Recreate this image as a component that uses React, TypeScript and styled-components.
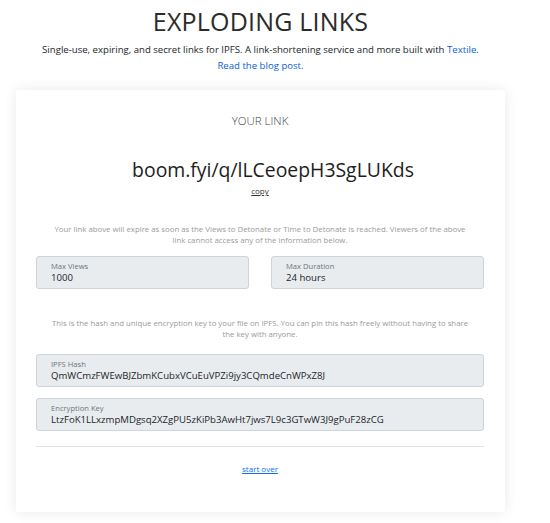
import React from "react";
import styled, { createGlobalStyle } from "styled-components";

const Global = createGlobalStyle`
  html, body { margin: 0; padding: 0; background: #ffffff; }
  body { font-family: "Open Sans", "Noto Sans", sans-serif; color: #212529; }
`;

const Page = styled.div`
  width: 521px;
  padding: 0 16px 13px;
  box-sizing: border-box;
`;

const Header = styled.header`
  text-align: center;
  padding-top: 6px;
`;

const Title = styled.h1`
  margin: 0;
  font-size: 25px;
  font-weight: 400;
  line-height: 30px;
  color: #2b2b2b;
  letter-spacing: 0.2px;
`;

const Lead = styled.p`
  margin: 6px 0 0;
  font-size: 9.6px;
  line-height: 16px;
  color: #212529;
`;

const A = styled.a`
  color: #0b5ed7;
  text-decoration: none;
`;

const Card = styled.main`
  margin-top: 16px;
  background: #fff;
  border-radius: 3px;
  box-shadow: 0 0 14px rgba(0, 0, 0, 0.09);
  padding: 23px 21px 37px 20px;
  display: flex;
  flex-direction: column;
  align-items: stretch;
`;

const Eyebrow = styled.div`
  text-align: center;
  font-size: 11.5px;
  font-weight: 300;
  color: #444;
  line-height: 16px;
`;

const LinkText = styled.div`
  margin-top: 28px;
  padding-left: 26px;
  text-align: center;
  font-size: 19.4px;
  line-height: 26px;
  color: #1d1d1d;
`;

const Copy = styled.a`
  display: block;
  margin-top: 2px;
  text-align: center;
  font-size: 8px;
  color: #333;
  text-decoration: underline;
  line-height: 12px;
`;

const Note = styled.p<{ $top: number }>`
  margin: ${(p) => p.$top}px 15px 0;
  text-align: center;
  font-size: 7.8px;
  line-height: 11px;
  color: #9a9a9a;
`;

const Row = styled.div`
  display: grid;
  grid-template-columns: 1fr 1fr;
  gap: 22px;
  margin-top: 10px;
`;

const Field = styled.div<{ $top?: number }>`
  margin-top: ${(p) => p.$top ?? 0}px;
  background: #e9ecef;
  border: 1px solid #ced4da;
  border-radius: 3px;
  padding: 3px 14px 3px;
  height: 33px;
  box-sizing: border-box;
  display: flex;
  flex-direction: column;
  justify-content: center;
`;

const Label = styled.span`
  font-size: 7.6px;
  line-height: 10px;
  color: #6c757d;
`;

const Value = styled.span`
  font-size: 9.6px;
  line-height: 13px;
  color: #212529;
  white-space: nowrap;
`;

const Divider = styled.hr`
  margin: 15px 0 0;
  border: 0;
  border-top: 1px solid #e5e5e5;
`;

const StartOver = styled.a`
  display: block;
  margin-top: 16px;
  text-align: center;
  font-size: 8px;
  line-height: 12px;
  color: #0d6efd;
  text-decoration: underline;
`;

export default function App() {
  return (
    <>
      <Global />
      <Page>
        <Header>
          <Title>EXPLODING LINKS</Title>
          <Lead>
            Single-use, expiring, and secret links for IPFS. A link-shortening service and more built with{" "}
            <A href="#">Textile</A>.
            <br />
            <A href="#">Read the blog post.</A>
          </Lead>
        </Header>
        <Card>
          <Eyebrow>YOUR LINK</Eyebrow>
          <LinkText>boom.fyi/q/lLCeoepH3SgLUKds</LinkText>
          <Copy href="#">copy</Copy>
          <Note $top={27}>
            Your link above will expire as soon as the Views to Detonate or Time to Detonate is reached. Viewers of the above
            link cannot access any of the information below.
          </Note>
          <Row>
            <Field>
              <Label>Max Views</Label>
              <Value>1000</Value>
            </Field>
            <Field>
              <Label>Max Duration</Label>
              <Value>24 hours</Value>
            </Field>
          </Row>
          <Note $top={29}>
            This is the hash and unique encryption key to your file on IPFS. You can pin this hash freely without having to share
            the key with anyone.
          </Note>
          <Field $top={14}>
            <Label>IPFS Hash</Label>
            <Value>QmWCmzFWEwBJZbmKCubxVCuEuVPZi9jy3CQmdeCnWPxZ8J</Value>
          </Field>
          <Field $top={11}>
            <Label>Encryption Key</Label>
            <Value>LtzFoK1LLxzmpMDgsq2XZgPU5zKiPb3AwHt7jws7L9c3GTwW3J9gPuF28zCG</Value>
          </Field>
          <Divider />
          <StartOver href="#">start over</StartOver>
        </Card>
      </Page>
    </>
  );
}
